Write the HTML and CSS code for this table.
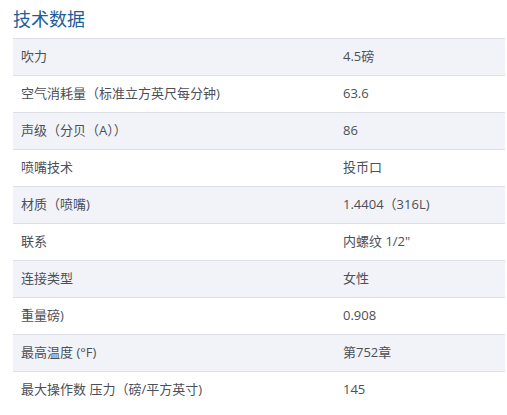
FILE: index.html
```html
<!DOCTYPE html>
<html lang="zh">
<head>
<meta charset="utf-8">
<link rel="stylesheet" href="styles.css">
</head>
<body>
<section class="specs">
  <h2 class="specs-title">技术数据</h2>
  <div class="specs-table">
    <div class="row"><span class="label">吹力</span><span class="value">4.5磅</span></div>
    <div class="row"><span class="label">空气消耗量（标准立方英尺每分钟)</span><span class="value">63.6</span></div>
    <div class="row"><span class="label">声级（分贝（A））</span><span class="value">86</span></div>
    <div class="row"><span class="label">喷嘴技术</span><span class="value">投币口</span></div>
    <div class="row"><span class="label">材质（喷嘴)</span><span class="value">1.4404（316L)</span></div>
    <div class="row"><span class="label">联系</span><span class="value">内螺纹 1/2"</span></div>
    <div class="row"><span class="label">连接类型</span><span class="value">女性</span></div>
    <div class="row"><span class="label">重量磅)</span><span class="value">0.908</span></div>
    <div class="row"><span class="label">最高温度 (°F)</span><span class="value">第752章</span></div>
    <div class="row"><span class="label">最大操作数 压力（磅/平方英寸)</span><span class="value">145</span></div>
  </div>
</section>
</body>
</html>
```

FILE: styles.css
```css
html, body {
  margin: 0;
  padding: 0;
  background: #ffffff;
}

body {
  font-family: "Open Sans", "Noto Sans CJK SC", sans-serif;
  color: #4b5058;
}

.specs {
  padding: 5px 2px 0 13px;
}

.specs-title {
  margin: 0;
  font-family: "Noto Sans CJK SC", sans-serif;
  font-weight: 400;
  font-size: 18px;
  line-height: 27px;
  color: #1d5d9b;
  height: 33px;
}

.specs-table {
  display: flex;
  flex-direction: column;
  font-size: 13px;
}

.row {
  display: grid;
  grid-template-columns: 322px 1fr;
  align-items: center;
  height: 36px;
  border-top: 1px solid #dcdfe5;
  line-height: 18px;
}

.row:nth-child(odd) {
  background: #f1f3f8;
}

.label,
.value {
  padding: 0 8px;
  position: relative;
  top: -1px;
}
```
